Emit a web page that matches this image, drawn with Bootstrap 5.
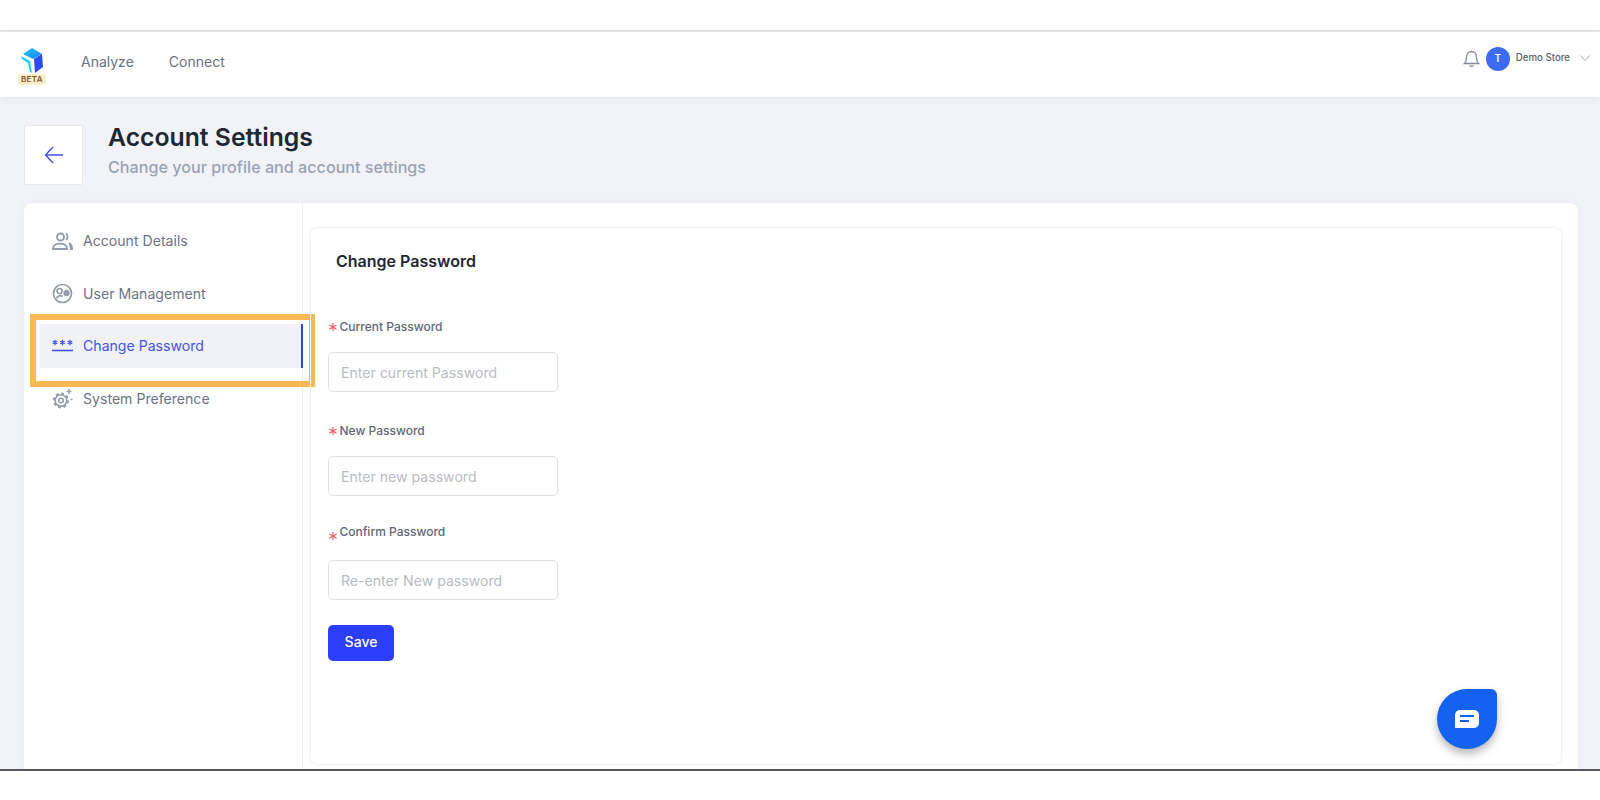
<!DOCTYPE html>
<html lang="en">
<head>
<meta charset="utf-8">
<title>Account Settings</title>
<link href="https://cdn.jsdelivr.net/npm/bootstrap@5.3.0/dist/css/bootstrap.min.css" rel="stylesheet">
<style>
html,body{height:800px;overflow:hidden}
body{font-family:Inter,"Liberation Sans",sans-serif;background:#fff;color:#1f2733}
.top-strip{height:32px;background:#fff;border-bottom:2px solid #e4e4e6}
.app-bar{height:65px;background:#fff;padding:0 11px 0 16px;box-shadow:0 2px 8px rgba(40,50,90,.06);position:relative;z-index:2}
.logo-box{width:30px;margin-right:32px;margin-left:1px;padding-top:3px}
.beta-tag{font-size:8px;font-weight:600;letter-spacing:.4px;line-height:11px;background:#fdeec8;color:#7c5230;border-radius:2px;padding:0 3px;margin-top:0}
.top-link{font-size:14px;color:#6a7285;margin-left:2px;margin-right:33px;margin-bottom:6px;text-decoration:none}
.user-area{margin-top:-12px}
.avatar-dot{width:24px;height:24px;background:#3d6af7;color:#fff;font-size:10px;font-weight:600;margin-left:6px}
.store-name{font-size:9.7px;font-weight:500;color:#5b6170;margin-left:6px}
.caret-mark{margin-left:10px;margin-right:-1px;margin-top:-2px}
.main-area{height:672px;background:#f1f3f8;padding:28px 22px 0 24px;overflow:hidden}
.back-box{width:59px;height:60px;background:#fff;border:1px solid #e6e8ee;border-radius:2px}
.head-text{margin-left:25px}
.page-title{font-size:24.750px;font-weight:600;line-height:29px;color:#1f2733;margin:-2px 0 0}
.page-sub{font-size:16.150px;font-weight:500;color:#9aa3b5;line-height:20px;margin-top:5px}
.settings-sheet{background:#fff;border-radius:8px 8px 0 0;margin-top:18px;height:567px;box-shadow:0 0 6px rgba(60,70,110,.06)}
.side-col{width:279px;flex:none;border-right:1px solid #eef0f4;padding-top:16px;padding-left:16px;position:relative}
.side-item{height:44px;font-size:14.100px;color:#6d7486;padding-left:12px;gap:10px;margin-bottom:8.400px}
.side-item.is-on{background:#f1f2f7;color:#4453f6;border-right:2px solid #2f45e8;margin-right:-1px}
.side-item svg{width:21px;height:21px;flex:none}
.focus-frame{position:absolute;left:6px;top:111px;width:285px;height:73px;border:6px solid #fdb953;pointer-events:none}
.form-panel{margin:24px 16px 5px 7px;flex:1;border:1px solid #eef1f5;border-radius:8px;padding:22px 17px;position:relative;box-shadow:0 0 4px rgba(60,70,110,.04)}
.panel-title{font-size:16px;font-weight:600;color:#1f2733;margin:0 0 0 8px;line-height:22px}
.field-wrap{width:230px;margin-top:32px}
.field-wrap.is-first{margin-top:48px}
.field-wrap.is-raised{margin-top:29px}
.field-wrap.is-raised .field-input{margin-top:20px}
.field-wrap.is-raised .req-star{vertical-align:-11px}
.field-label{font-size:12px;font-weight:500;color:#5f6778;line-height:14px;margin:0;display:block}
.req-star{display:inline-block;width:11.500px;color:#f4545f;font-size:20px;line-height:0;font-weight:300;vertical-align:-7px}
.field-input{height:40px;border:1px solid #dfe1e6;border-radius:5px;font-size:14.100px;padding:0 12px;color:#333;margin-top:18px}
.field-input::placeholder{color:#b9bcc4}
.save-btn{background:#2b3ffb;border:0;color:#fff;font-size:14px;font-weight:500;width:66px;height:36px;border-radius:5px;padding:0 0 3px;margin-top:25px}
.chat-bubble{position:absolute;right:64px;bottom:15px;width:60px;height:60px;background:#1362f2;border-radius:50% 6px 50% 50%;box-shadow:0 5px 8px rgba(0,0,0,.28)}
.bottom-strip{height:31px;background:#fff;border-top:2px solid #55575c}
</style>
</head>
<body>
<div class="top-strip"></div>
<nav class="app-bar d-flex align-items-center">
  <div class="logo-box d-flex flex-column align-items-center">
    <svg width="24" height="26" viewBox="0 0 24 26" aria-hidden="true">
      <defs><linearGradient id="logoTop" x1="0" y1="0" x2="1" y2="1"><stop offset="0" stop-color="#18cdf6"/><stop offset="1" stop-color="#1f7bf5"/></linearGradient></defs>
      <polygon points="12,0 22,6 13,11 3,6" fill="url(#logoTop)"/>
      <polygon points="22,6 23,19 15,25 14,11" fill="#2a4cf5"/>
      <polygon points="1,8 10,13 12,25 10,24 8,15 2,11" fill="#1fd0f5"/>
    </svg>
    <span class="beta-tag">BETA</span>
  </div>
  <a class="top-link" href="#">Analyze</a>
  <a class="top-link" href="#">Connect</a>
  <div class="user-area ms-auto d-flex align-items-center">
    <svg width="17" height="19" viewBox="0 0 17 19" fill="none" stroke="#85899a" stroke-width="1.300" aria-hidden="true">
      <path d="M1.500 14.500h14c-1.500-1.500-2-3-2-6.500 0-3-2-5.500-5-5.500s-5 2.500-5 5.500c0 3.500-.5 5-2 6.500z"/>
      <path d="M6.500 16.500c.5 1 3.500 1 4 0"/>
    </svg>
    <span class="avatar-dot rounded-circle d-flex align-items-center justify-content-center">T</span>
    <span class="store-name">Demo Store</span>
    <svg class="caret-mark" width="10" height="6" viewBox="0 0 10 6" fill="none" stroke="#a3a8b6" stroke-width="1" aria-hidden="true"><path d="M.5.500 5 5.500 9.500.5"/></svg>
  </div>
</nav>
<main class="main-area">
  <header class="d-flex">
    <div class="back-box d-flex align-items-center justify-content-center flex-shrink-0">
      <svg width="20" height="18" viewBox="0 0 20 18" fill="none" stroke="#4250f5" stroke-width="1.400" aria-hidden="true"><path d="M19 9H1.500M9 1 1.500 9 9 17"/></svg>
    </div>
    <div class="head-text">
      <h1 class="page-title">Account Settings</h1>
      <div class="page-sub">Change your profile and account settings</div>
    </div>
  </header>
  <section class="settings-sheet d-flex">
    <aside class="side-col">
      <div class="side-item d-flex align-items-center">
        <svg viewBox="0 0 21 21" fill="none" stroke="#959baa" stroke-width="1.900" aria-hidden="true"><circle cx="8.500" cy="6" r="3.500"/><path d="M1 17.500c0-6.500 14-6.500 14 0v.5H1z"/><path d="M14 2.500c2 1 2 5.500 0 6.500"/><path d="M17 12c2 1 3 3 3 6h-2" fill="#959baa"/></svg>
        <span>Account Details</span>
      </div>
      <div class="side-item d-flex align-items-center">
        <svg viewBox="0 0 21 21" fill="none" stroke="#959baa" stroke-width="1.700" aria-hidden="true"><circle cx="10.500" cy="10.500" r="9"/><circle cx="7.500" cy="8" r="2.500"/><circle cx="14.500" cy="10" r="2.300" fill="#959baa"/><path d="M4.500 15.500c1-3 4-3.500 6-2"/></svg>
        <span>User Management</span>
      </div>
      <div class="side-item is-on d-flex align-items-center">
        <svg viewBox="0 0 21 21" fill="none" stroke="#3a4cf5" aria-hidden="true"><path stroke-width="1.200" d="M3 4.800v5.400M.7 6.200 5.300 8.800M5.300 6.200.7 8.800M10.500 4.800v5.400M8.200 6.200 12.800 8.800M12.800 6.200 8.200 8.800M18 4.800v5.400M15.700 6.200 20.300 8.800M20.300 6.200 15.700 8.800"/><path stroke-width="1.500" d="M0 15.500h21"/></svg>
        <span>Change Password</span>
      </div>
      <div class="side-item d-flex align-items-center">
        <svg viewBox="0 0 21 21" fill="none" stroke="#959baa" aria-hidden="true"><circle cx="9" cy="12.500" r="2.300" stroke-width="1.500"/><circle cx="9" cy="12.500" r="5.800" stroke-width="1.500"/><circle cx="9" cy="12.500" r="7" stroke-width="2" stroke-dasharray="2.900 2.600"/><path stroke-width="1.500" d="M17 1v5M14.500 3.500h5M18.500 11.500h2"/></svg>
        <span>System Preference</span>
      </div>
      <div class="focus-frame"></div>
    </aside>
    <div class="form-panel">
      <h2 class="panel-title">Change Password</h2>
      <form>
        <div class="field-wrap is-first">
          <label class="field-label" for="curPw"><span class="req-star">*</span>Current Password</label>
          <input id="curPw" class="form-control field-input" type="text" placeholder="Enter current Password">
        </div>
        <div class="field-wrap">
          <label class="field-label" for="newPw"><span class="req-star">*</span>New Password</label>
          <input id="newPw" class="form-control field-input" type="text" placeholder="Enter new password">
        </div>
        <div class="field-wrap is-raised">
          <label class="field-label" for="conPw"><span class="req-star">*</span>Confirm Password</label>
          <input id="conPw" class="form-control field-input" type="text" placeholder="Re-enter New password">
        </div>
        <button type="button" class="btn save-btn">Save</button>
      </form>
      <div class="chat-bubble d-flex align-items-center justify-content-center">
        <svg width="24" height="18" viewBox="0 0 24 18" aria-hidden="true"><path fill="#fff" d="M5 0h14a5 5 0 0 1 5 5v8a5 5 0 0 1-5 5H0V5a5 5 0 0 1 5-5z"/><path fill="#1362f2" d="M5 5h14v2H5zM5 10h9v2H5z"/></svg>
      </div>
    </div>
  </section>
</main>
<div class="bottom-strip"></div>
<script src="https://cdn.jsdelivr.net/npm/bootstrap@5.3.0/dist/js/bootstrap.bundle.min.js"></script>
</body>
</html>
